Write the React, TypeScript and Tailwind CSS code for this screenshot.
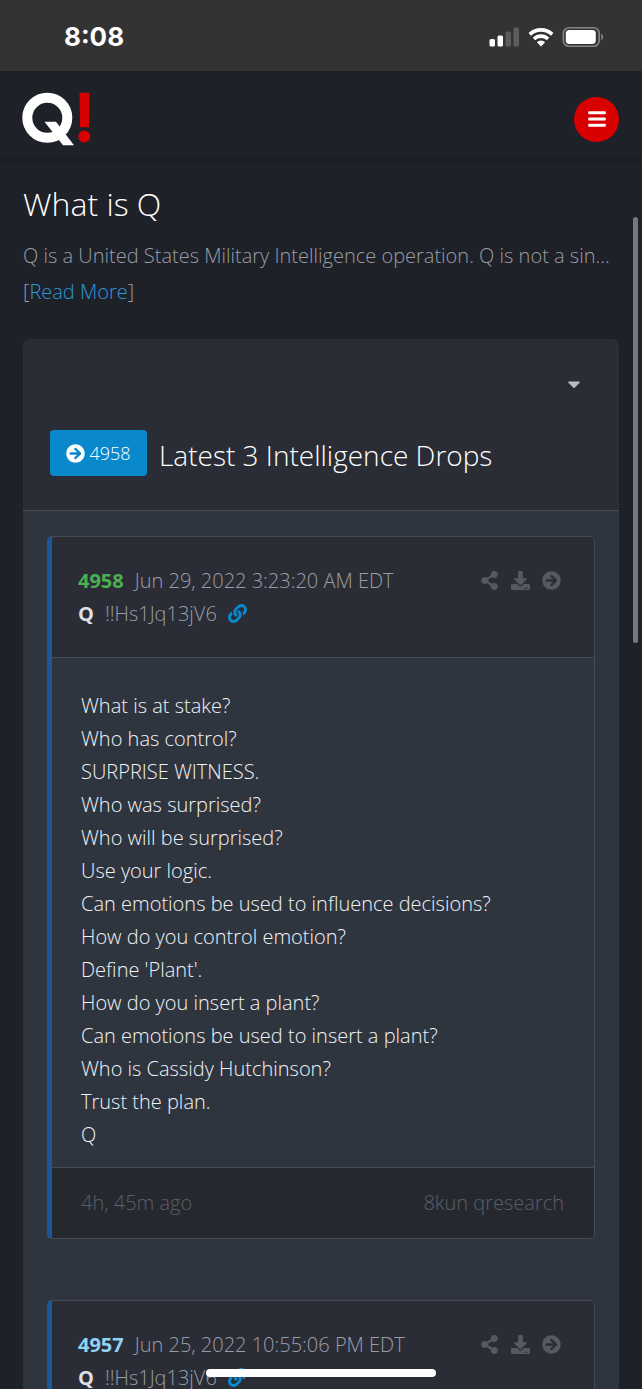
import {
  FaArrowCircleRight,
  FaBars,
  FaCaretDown,
  FaDownload,
  FaLink,
  FaShareAlt,
} from "react-icons/fa";

interface Drop {
  id: number;
  date: string;
  trip: string;
  numberClass: string;
  lines: string[];
  age: string;
  board: string;
}

const drops: Drop[] = [
  {
    id: 4958,
    date: "Jun 29, 2022 3:23:20 AM EDT",
    trip: "!!Hs1Jq13jV6",
    numberClass: "text-[#4caf50]",
    lines: [
      "What is at stake?",
      "Who has control?",
      "SURPRISE WITNESS.",
      "Who was surprised?",
      "Who will be surprised?",
      "Use your logic.",
      "Can emotions be used to influence decisions?",
      "How do you control emotion?",
      "Define 'Plant'.",
      "How do you insert a plant?",
      "Can emotions be used to insert a plant?",
      "Who is Cassidy Hutchinson?",
      "Trust the plan.",
      "Q",
    ],
    age: "4h, 45m ago",
    board: "8kun qresearch",
  },
  {
    id: 4957,
    date: "Jun 25, 2022 10:55:06 PM EDT",
    trip: "!!Hs1Jq13jV6",
    numberClass: "text-[#8fd3f5]",
    lines: [],
    age: "",
    board: "",
  },
];

function StatusBar() {
  return (
    <div className="flex h-[71px] shrink-0 items-center justify-between bg-[#333333] pt-0.5 pr-[38px] pl-16 text-white">
      <span className="font-['Inter',sans-serif] font-bold text-[26px] leading-8">
        8:08
      </span>
      <div className="flex items-center gap-2">
        <svg width="31" height="20" viewBox="0 0 31 20" aria-hidden="true">
          <rect x="0.5" y="12" width="5.5" height="7.5" rx="1.5" fill="#fff" />
          <rect x="8.5" y="8.5" width="5.5" height="11" rx="1.5" fill="#fff" />
          <rect x="16.5" y="4.5" width="5.5" height="15" rx="1.5" fill="#5c5c5c" />
          <rect x="24.5" y="0.5" width="5.5" height="19" rx="1.5" fill="#5c5c5c" />
        </svg>
        <svg width="26" height="20" viewBox="0 0 26 20" aria-hidden="true">
          <g fill="none" stroke="#fff" strokeWidth="3.6">
            <path d="M1.8 7.4a16 16 0 0 1 22.4 0" />
            <path d="M6 12a10 10 0 0 1 14 0" />
          </g>
          <path d="M13 19.4 8.9 15.3a5.8 5.8 0 0 1 8.2 0z" fill="#fff" />
        </svg>
        <svg width="42" height="20" viewBox="0 0 42 20" aria-hidden="true">
          <rect x="1.4" y="0.8" width="35.8" height="18.4" rx="5.5" fill="none" stroke="#858585" strokeWidth="1.6" />
          <rect x="3.8" y="3" width="30" height="14" rx="3.4" fill="#fff" />
          <path d="M39.2 6.8c2.6 1 2.6 5.4 0 6.4z" fill="#858585" />
        </svg>
      </div>
    </div>
  );
}

function Logo() {
  return (
    <svg width="70" height="54" viewBox="0 0 70 54" role="img" aria-label="Q!">
      <circle cx="25.3" cy="25.8" r="20" fill="none" stroke="#fff" strokeWidth="10" />
      <path d="M22.5 29.8H34L52 53.3H41z" fill="#fff" />
      <path d="M57.5 0.8h10L67 35.3h-9z" fill="#d80000" />
      <circle cx="62.3" cy="44.6" r="6" fill="#d80000" />
    </svg>
  );
}

function DropCard({ drop }: { drop: Drop }) {
  return (
    <article className="overflow-hidden rounded-[5px] border border-[#464b53] border-l-[5px] border-l-[#1e5799]">
      <header className="flex items-start justify-between border-[#464b53] border-b bg-[#2a2d35] pt-[27px] pr-[33px] pb-[27px] pl-[26px]">
        <div className="leading-[33px]">
          <div className="flex gap-[11px]">
            <span className={`font-bold ${drop.numberClass}`}>{drop.id}</span>
            <time>{drop.date}</time>
          </div>
          <div className="flex items-center gap-[11px]">
            <span className="font-bold text-[#dcdfe6]">Q</span>
            <span>{drop.trip}</span>
            <a href="#link" aria-label="Link" className="text-[#0a88cc]">
              <FaLink size={19} />
            </a>
          </div>
        </div>
        <div className="flex h-[33px] items-center gap-3 text-[#555962]">
          <button type="button" aria-label="Share">
            <FaShareAlt size={19} />
          </button>
          <button type="button" aria-label="Download">
            <FaDownload size={19} />
          </button>
          <button type="button" aria-label="Open">
            <FaArrowCircleRight size={19} />
          </button>
        </div>
      </header>
      <div className="min-h-16 px-[29px] pt-[31px] pb-4 text-[#f1f3f8] leading-[33px]">
        {drop.lines.map((line) => (
          <p key={line}>{line}</p>
        ))}
      </div>
      <footer className="flex h-[71px] items-center justify-between border-[#464b53] border-t bg-[#26282f] pr-[30px] pl-[29px] text-[#5b5e69]">
        <span>{drop.age}</span>
        <span>{drop.board}</span>
      </footer>
    </article>
  );
}

export default function App() {
  return (
    <div className="relative flex h-screen flex-col overflow-hidden bg-[#1e2128] font-['Open_Sans',sans-serif] font-light text-[#9a9da7] text-[20px]">
      <StatusBar />
      <header className="flex h-[90px] shrink-0 items-center justify-between border-[#191c22] border-b-2 pt-2 pr-[23px] pl-[22px]">
        <a href="#home">
          <Logo />
        </a>
        <button
          type="button"
          aria-label="Menu"
          className="flex size-[45px] items-center justify-center rounded-full bg-[#d80000] text-white"
        >
          <FaBars size={20} />
        </button>
      </header>

      <main className="px-[23px] pt-5">
        <h1 className="text-[32px] text-white leading-[46px]">What is Q</h1>
        <p className="mt-[11px] whitespace-nowrap leading-9">
          Q is a United States Military Intelligence operation. Q is not a sin...
        </p>
        <p className="leading-9">
          [
          <a href="#more" className="text-[#2f97d6]">
            Read More
          </a>
          ]
        </p>

        <section className="mt-[29px] overflow-hidden rounded-t-[7px] bg-[#2f353f]">
          <div className="border-[#464b53] border-b bg-[#2a2d35] px-[27px] pb-[34px]">
            <div className="flex h-[91px] items-center justify-end pr-2 pb-0.5">
              <button type="button" aria-label="Options" className="text-[#b9bcc3]">
                <FaCaretDown size={20} />
              </button>
            </div>
            <div className="flex items-end gap-3">
              <a
                href="#latest"
                className="flex h-[46px] w-[97px] items-center justify-center gap-1 rounded-[4px] bg-[#0a88cc] text-[18px] text-white"
              >
                <FaArrowCircleRight size={19} />
                4958
              </a>
              <h2 className="whitespace-nowrap text-[28px] text-white leading-[42px]">
                Latest 3 Intelligence Drops
              </h2>
            </div>
          </div>
          <div className="flex flex-col gap-[61px] px-6 pt-[25px]">
            {drops.map((drop) => (
              <DropCard key={drop.id} drop={drop} />
            ))}
          </div>
        </section>
      </main>

      {/* scroll thumb and home indicator float over the page */}
      <div className="absolute top-[217px] right-1 h-[426px] w-[5px] rounded-full bg-[#757881]" />
      <div className="absolute bottom-3 left-1/2 h-2 w-[230px] -translate-x-1/2 rounded-full bg-white" />
    </div>
  );
}
